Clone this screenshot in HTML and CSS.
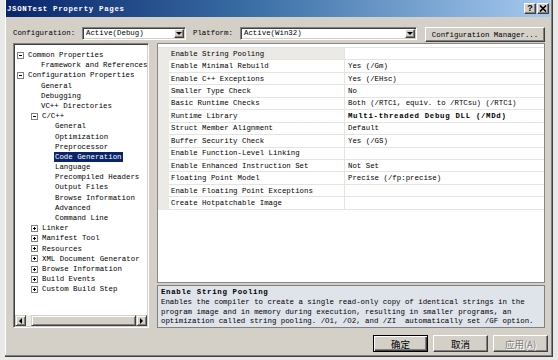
FILE: index.html
```html
<!DOCTYPE html>
<html>
<head>
<meta charset="utf-8">
<title>JSONTest Property Pages</title>
<link rel="stylesheet" href="styles.css">
</head>
<body>
<div class="desktop">
  <div class="dialog">
    <div class="titlebar">
      <span class="title">JSONTest Property Pages</span>
      <div class="caption-btns">
        <span class="cbtn help">?</span>
        <span class="cbtn close"><svg width="8" height="7" viewBox="0 0 8 7"><path d="M1 0.5 L7 6.5 M7 0.5 L1 6.5" stroke="#000" stroke-width="1.6"/></svg></span>
      </div>
    </div>
    <div class="content">
      <div class="cfg-row">
        <span class="cfg-label">Configuration:</span>
        <div class="combo combo-cfg"><span class="combo-text">Active(Debug)</span><span class="combo-arrow"><span class="tri-down"></span></span></div>
        <span class="cfg-label plat">Platform:</span>
        <div class="combo combo-plat"><span class="combo-text">Active(Win32)</span><span class="combo-arrow"><span class="tri-down"></span></span></div>
        <button class="btn cfg-mgr">Configuration Manager...</button>
      </div>

      <div class="main">
        <div class="tree">
          <ul class="tree-list">
            <li class="row l0"><span class="exp"></span><span class="label">Common Properties</span></li>
            <li class="row leaf1"><span class="label">Framework and References</span></li>
            <li class="row l0"><span class="exp"></span><span class="label">Configuration Properties</span></li>
            <li class="row leaf1"><span class="label">General</span></li>
            <li class="row leaf1"><span class="label">Debugging</span></li>
            <li class="row leaf1"><span class="label">VC++ Directories</span></li>
            <li class="row l1"><span class="exp"></span><span class="label">C/C++</span></li>
            <li class="row leaf2"><span class="label">General</span></li>
            <li class="row leaf2"><span class="label">Optimization</span></li>
            <li class="row leaf2"><span class="label">Preprocessor</span></li>
            <li class="row leaf2"><span class="label selected">Code Generation</span></li>
            <li class="row leaf2"><span class="label">Language</span></li>
            <li class="row leaf2"><span class="label">Precompiled Headers</span></li>
            <li class="row leaf2"><span class="label">Output Files</span></li>
            <li class="row leaf2"><span class="label">Browse Information</span></li>
            <li class="row leaf2"><span class="label">Advanced</span></li>
            <li class="row leaf2"><span class="label">Command Line</span></li>
            <li class="row l1"><span class="exp plus"></span><span class="label">Linker</span></li>
            <li class="row l1"><span class="exp plus"></span><span class="label">Manifest Tool</span></li>
            <li class="row l1"><span class="exp plus"></span><span class="label">Resources</span></li>
            <li class="row l1"><span class="exp plus"></span><span class="label">XML Document Generator</span></li>
            <li class="row l1"><span class="exp plus"></span><span class="label">Browse Information</span></li>
            <li class="row l1"><span class="exp plus"></span><span class="label">Build Events</span></li>
            <li class="row l1"><span class="exp plus"></span><span class="label">Custom Build Step</span></li>
          </ul>
          <div class="hscroll">
            <span class="sb-btn"><span class="tri-left"></span></span>
            <span class="sb-track"><span class="sb-thumb"></span></span>
            <span class="sb-btn"><span class="tri-right"></span></span>
          </div>
        </div>

        <div class="right">
          <div class="grid">
            <div class="props">
              <span class="gut"></span><span class="name sel">Enable String Pooling</span><span class="val"></span>
              <span class="gut"></span><span class="name">Enable Minimal Rebuild</span><span class="val">Yes (/Gm)</span>
              <span class="gut"></span><span class="name">Enable C++ Exceptions</span><span class="val">Yes (/EHsc)</span>
              <span class="gut"></span><span class="name">Smaller Type Check</span><span class="val">No</span>
              <span class="gut"></span><span class="name">Basic Runtime Checks</span><span class="val">Both (/RTC1, equiv. to /RTCsu) (/RTC1)</span>
              <span class="gut"></span><span class="name">Runtime Library</span><span class="val bold">Multi-threaded Debug DLL (/MDd)</span>
              <span class="gut"></span><span class="name">Struct Member Alignment</span><span class="val">Default</span>
              <span class="gut"></span><span class="name">Buffer Security Check</span><span class="val">Yes (/GS)</span>
              <span class="gut"></span><span class="name">Enable Function-Level Linking</span><span class="val"></span>
              <span class="gut"></span><span class="name">Enable Enhanced Instruction Set</span><span class="val">Not Set</span>
              <span class="gut"></span><span class="name">Floating Point Model</span><span class="val">Precise (/fp:precise)</span>
              <span class="gut"></span><span class="name">Enable Floating Point Exceptions</span><span class="val"></span>
              <span class="gut"></span><span class="name">Create Hotpatchable Image</span><span class="val"></span>
            </div>
          </div>
          <div class="desc">
            <div class="desc-title">Enable String Pooling</div>
            <div class="desc-text">Enables the compiler to create a single read-only copy of identical strings in the<br>program image and in memory during execution, resulting in smaller programs, an<br>optimization called string pooling. /O1, /O2, and /ZI&nbsp; automatically set /GF option.</div>
          </div>
        </div>
      </div>

      <div class="actions">
        <button class="btn cjk default">确定</button>
        <button class="btn cjk">取消</button>
        <button class="btn cjk disabled">应用(A)</button>
      </div>
    </div>
  </div>
</div>
</body>
</html>
```
FILE: styles.css
```css
* { box-sizing: border-box; }
html, body { margin: 0; padding: 0; }
body {
  width: 558px;
  height: 360px;
  overflow: hidden;
  background: #e9e9e9;
  font-family: "Liberation Mono", "DejaVu Sans Mono", "Noto Sans CJK SC", monospace;
  font-size: 7.4px;
  color: #000;
}
.desktop {
  display: flex;
  padding-left: 5px;
  height: 360px;
}
.dialog {
  width: 548px;
  height: 357px;
  background: #d4d0c8;
  border-right: 1px solid #404040;
  border-bottom: 1px solid #404040;
  box-shadow: inset -1px -1px #808080, inset 1px 0 #ffffff;
  display: flex;
  flex-direction: column;
}
.titlebar {
  height: 17px;
  margin: 0 2px 0 1px;
  background: linear-gradient(to right, #0a246a 0%, #3a6ea5 45%, #a6caf0 100%);
  display: flex;
  align-items: center;
  justify-content: space-between;
  padding-left: 1px;
}
.title {
  color: #fff;
  font-weight: bold;
  letter-spacing: 0.68px;
  line-height: 10px;
}
.caption-btns {
  display: flex;
  gap: 1px;
  margin-right: 1px;
}
.cbtn {
  width: 12px;
  height: 11px;
  background: #d4d0c8;
  border: 1px solid;
  border-color: #fff #404040 #404040 #fff;
  box-shadow: inset -1px -1px #808080;
  display: flex;
  align-items: center;
  justify-content: center;
  font-family: "Liberation Sans", sans-serif;
  font-weight: bold;
  font-size: 9px;
  line-height: 9px;
}
.content {
  flex: 1;
  padding: 0 7px 0 8px;
  display: flex;
  flex-direction: column;
}
.cfg-row {
  margin-top: 10px;
  height: 15px;
  display: flex;
  align-items: flex-start;
}
.cfg-label {
  width: 69px;
  line-height: 13px;
  white-space: nowrap;
}
.cfg-label.plat {
  width: 54px;
  padding-left: 7px;
}
.combo {
  height: 13px;
  background: #fff;
  border: 1px solid;
  border-color: #808080 #fff #fff #808080;
  box-shadow: inset 1px 1px #404040, inset -1px -1px #d4d0c8;
  padding: 1px;
  display: flex;
  align-items: stretch;
}
.combo-cfg { width: 104px; }
.combo-plat { width: 177px; }
.combo-text {
  flex: 1;
  padding-left: 2px;
  line-height: 9px;
  white-space: nowrap;
  overflow: hidden;
}
.combo-arrow {
  width: 10px;
  background: #d4d0c8;
  border: 1px solid;
  border-color: #fff #404040 #404040 #fff;
  box-shadow: inset -1px -1px #808080;
  display: flex;
  align-items: center;
  justify-content: center;
}
.tri-down {
  width: 0;
  height: 0;
  border-left: 3px solid transparent;
  border-right: 3px solid transparent;
  border-top: 3px solid #000;
}
.tri-left {
  width: 0;
  height: 0;
  border-top: 3px solid transparent;
  border-bottom: 3px solid transparent;
  border-right: 3px solid #000;
}
.tri-right {
  width: 0;
  height: 0;
  border-top: 3px solid transparent;
  border-bottom: 3px solid transparent;
  border-left: 3px solid #000;
}
.btn {
  font-family: inherit;
  font-size: 7.4px;
  color: #000;
  background: #d4d0c8;
  border: 1px solid;
  border-color: #fff #404040 #404040 #fff;
  box-shadow: inset -1px -1px #808080;
  padding: 0;
  margin: 0;
  display: flex;
  align-items: center;
  justify-content: center;
  white-space: nowrap;
}
.cfg-mgr {
  flex: 1;
  height: 15px;
  margin-left: 8px;
}
.main {
  margin-top: 1px;
  height: 285px;
  display: flex;
  gap: 8px;
}
.tree {
  width: 136px;
  background: #fff;
  border: 1px solid;
  border-color: #808080 #fff #fff #808080;
  box-shadow: inset 1px 1px #404040, inset -1px -1px #d4d0c8;
  padding: 1px;
  display: flex;
  flex-direction: column;
}
.tree-list {
  flex: 1;
  list-style: none;
  margin: 0;
  padding: 5px 0 0 0;
  overflow: hidden;
}
.row {
  height: 10.2px;
  line-height: 10.2px;
  display: flex;
  align-items: center;
  white-space: nowrap;
}
.l0 { padding-left: 2px; }
.l1 { padding-left: 16px; }
.leaf1 { padding-left: 25px; }
.leaf2 { padding-left: 39px; }
.label { padding: 0 1px; }
.label.selected {
  background: #0a246a;
  color: #fff;
}
.exp {
  position: relative;
  flex: none;
  width: 7px;
  height: 7px;
  border: 1px solid #808080;
  background: #fff;
  margin-right: 3px;
}
.exp::before {
  content: "";
  position: absolute;
  left: 1px;
  top: 2px;
  width: 3px;
  height: 1px;
  background: #000;
}
.exp.plus::after {
  content: "";
  position: absolute;
  left: 2px;
  top: 1px;
  width: 1px;
  height: 3px;
  background: #000;
}
.hscroll {
  height: 11px;
  display: flex;
}
.sb-btn {
  width: 11px;
  background: #d4d0c8;
  border: 1px solid;
  border-color: #d4d0c8 #404040 #404040 #d4d0c8;
  box-shadow: inset 1px 1px #fff, inset -1px -1px #808080;
  display: flex;
  align-items: center;
  justify-content: center;
}
.sb-track {
  flex: 1;
  display: flex;
  background: #ebe9e4;
  padding-left: 5px;
}
.sb-thumb {
  flex: 1;
  background: #d4d0c8;
  border: 1px solid;
  border-color: #d4d0c8 #404040 #404040 #d4d0c8;
  box-shadow: inset 1px 1px #fff, inset -1px -1px #808080;
}
.right {
  flex: 1;
  display: flex;
  flex-direction: column;
  gap: 2px;
}
.grid {
  height: 240px;
  background: #fff;
  border: 1px solid #888;
  padding-top: 3px;
}
.props {
  display: grid;
  grid-template-columns: 11px 176px 1fr;
  grid-auto-rows: 12.45px;
  border-top: 1px solid #e6e4df;
}
.gut {
  background: #eceae6;
}
.name, .val {
  border-bottom: 1px solid #e6e4df;
  display: flex;
  align-items: center;
  white-space: nowrap;
  overflow: hidden;
}
.name {
  padding-left: 2px;
  border-right: 1px solid #e6e4df;
}
.name.sel { background: #eceae6; }
.val { padding-left: 3px; }
.val.bold {
  font-weight: bold;
  letter-spacing: 0.68px;
}
.desc {
  flex: 1;
  background: #dfe3ea;
  border: 1px solid #808080;
  padding: 1px 3px 0 3px;
}
.desc-title {
  font-weight: bold;
  letter-spacing: 0.68px;
  line-height: 10px;
}
.desc-text {
  margin-top: 1px;
  line-height: 9.6px;
  white-space: nowrap;
}
.actions {
  margin-top: 7px;
  margin-right: -3px;
  height: 17px;
  display: flex;
  justify-content: flex-end;
  gap: 5px;
}
.btn.cjk {
  width: 55px;
  height: 17px;
  font-family: "Noto Sans CJK SC", "Liberation Sans", sans-serif;
  font-size: 9.5px;
}
.btn.default {
  border: 1px solid #000;
  box-shadow: inset 1px 1px #fff, inset -1px -1px #404040, inset -2px -2px #808080;
}
.btn.disabled {
  color: #808080;
  text-shadow: 1px 1px #fff;
}
```
